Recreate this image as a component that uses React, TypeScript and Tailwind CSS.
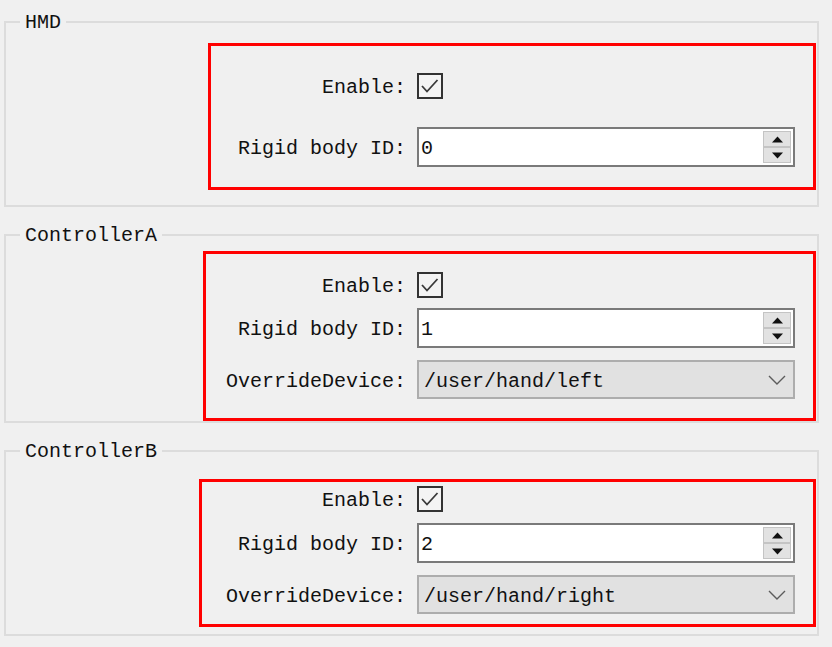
import React from "react";

const font = { fontFamily: '"Liberation Mono", "DejaVu Sans Mono", monospace' };

function Label({ text }: { text: string }) {
  return (
    <div className="w-[180px] shrink-0 translate-y-[2px] text-right text-[20px] leading-[20px] text-[#111]">{text}</div>
  );
}

function CheckBox() {
  return (
    <div className="h-[26px] w-[26px] border-2 border-[#333333] bg-[#f4f4f4]">
      <svg width="22" height="22" viewBox="0 0 22 22">
        <polyline points="3,11 8,16.5 18.5,5" fill="none" stroke="#3a3a3a" strokeWidth="1.8" />
      </svg>
    </div>
  );
}

function SpinBox({ value }: { value: string }) {
  return (
    <div className="flex h-[40px] w-[378px] border-2 border-[#7a7a7a] bg-white">
      <div className="flex flex-1 translate-y-[2px] items-center pl-[2px] text-[20px] leading-[20px] text-[#111]">{value}</div>
      <div className="flex w-[30px] flex-col py-[2px] pr-[2px]">
        <div className="flex h-[16px] items-center justify-center border border-[#c4c4c4] bg-[#e2e2e2]">
          <svg width="11" height="7" viewBox="0 0 11 7">
            <polygon points="0,6.5 5.5,0.5 11,6.5" fill="#111" />
          </svg>
        </div>
        <div className="flex h-[16px] items-center justify-center border border-[#c4c4c4] bg-[#e2e2e2]">
          <svg width="11" height="7" viewBox="0 0 11 7">
            <polygon points="0,0.5 5.5,6.5 11,0.5" fill="#111" />
          </svg>
        </div>
      </div>
    </div>
  );
}

function Combo({ value }: { value: string }) {
  return (
    <div className="flex h-[39px] w-[378px] items-center border-2 border-[#adadad] bg-[#e1e1e1] pl-[5px] pr-[7px]">
      <div className="flex-1 translate-y-[2px] text-[20px] leading-[20px] text-[#111]">{value}</div>
      <svg width="18" height="10" viewBox="0 0 18 10">
        <polyline points="1,1 9,9 17,1" fill="none" stroke="#5c5c5c" strokeWidth="1.4" />
      </svg>
    </div>
  );
}

function Row({ label, children }: { label: string; children: React.ReactNode }) {
  return (
    <div className="flex items-center gap-[11px]">
      <Label text={label} />
      {children}
    </div>
  );
}

export default function App() {
  return (
    <div className="h-[647px] w-[832px] overflow-hidden bg-[#f0f0f0] pl-[4px] pt-[12px]" style={font}>
      {/* HMD */}
      <fieldset className="w-[815px] border-2 border-[#dcdcdc] pb-[15px]">
        <legend className="ml-[14px] pl-[5px] pr-[5px] text-[20px] leading-[20px] text-[#111]">
          <span className="relative top-[1px]">HMD</span>
        </legend>
        <div className="ml-[202px] mt-[11px] w-[608px] border-[3px] border-[#ff0000] pb-[20px] pl-[15px] pt-[27px]">
          <Row label="Enable:">
            <CheckBox />
          </Row>
          <div className="mt-[28px]">
            <Row label="Rigid body ID:">
              <SpinBox value="0" />
            </Row>
          </div>
        </div>
      </fieldset>

      {/* ControllerA */}
      <fieldset className="mt-[18px] w-[815px] border-2 border-[#dcdcdc]">
        <legend className="ml-[14px] pl-[5px] pr-[5px] text-[20px] leading-[20px] text-[#111]">
          <span className="relative top-[1px]">ControllerA</span>
        </legend>
        <div className="ml-[197px] mt-[6px] w-[613px] border-[3px] border-[#ff0000] pb-[19px] pl-[20px] pt-[18px]">
          <Row label="Enable:">
            <CheckBox />
          </Row>
          <div className="mt-[10px]">
            <Row label="Rigid body ID:">
              <SpinBox value="1" />
            </Row>
          </div>
          <div className="mt-[12px]">
            <Row label="OverrideDevice:">
              <Combo value="/user/hand/left" />
            </Row>
          </div>
        </div>
      </fieldset>

      {/* ControllerB */}
      <fieldset className="mt-[18px] w-[815px] border-2 border-[#dcdcdc] pb-[7px]">
        <legend className="ml-[14px] pl-[5px] pr-[5px] text-[20px] leading-[20px] text-[#111]">
          <span className="relative top-[1px]">ControllerB</span>
        </legend>
        <div className="ml-[193px] mt-[18px] w-[617px] border-[3px] border-[#ff0000] pb-[10px] pl-[24px] pt-[4px]">
          <Row label="Enable:">
            <CheckBox />
          </Row>
          <div className="mt-[11px]">
            <Row label="Rigid body ID:">
              <SpinBox value="2" />
            </Row>
          </div>
          <div className="mt-[12px]">
            <Row label="OverrideDevice:">
              <Combo value="/user/hand/right" />
            </Row>
          </div>
        </div>
      </fieldset>
    </div>
  );
}
